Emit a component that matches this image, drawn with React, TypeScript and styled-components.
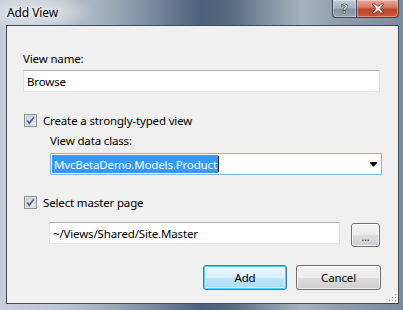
import React from "react";
import styled, { createGlobalStyle } from "styled-components";

const Global = createGlobalStyle`
  html, body { margin: 0; padding: 0; background: #fff; }
  body { font-family: "Segoe UI", "Noto Sans", sans-serif; }
`;

const Window = styled.div`
  position: relative;
  width: 403px;
  height: 310px;
  box-sizing: border-box;
  display: flex;
  flex-direction: column;
  padding: 0 4px 6px 6px;
  overflow: hidden;
  background:
    radial-gradient(ellipse 60px 18px at 35px 12px, rgba(255,255,255,0.55), rgba(255,255,255,0) 100%),
    linear-gradient(90deg, #c6cfd9 0%, #bcc6d1 15%, #9eacba 27%, #7889a0 38%, #4c6079 50%, #566a80 57%, #8595a6 67%, #a6b2bf 75%, #8e9cab 85%, #7c8c9c 100%);
`;

const TitleBar = styled.div`
  height: 25px;
  display: flex;
  align-items: flex-start;
  justify-content: space-between;
`;

const Title = styled.div`
  padding-top: 5px;
  margin-left: 1px;
  font-size: 12px;
  line-height: 15px;
  letter-spacing: -0.1px;
  color: #000;
  text-shadow: 0 0 6px rgba(255,255,255,0.9), 0 0 3px rgba(255,255,255,0.8);
`;

const Captions = styled.div`
  display: flex;
  height: 18px;
`;

const CaptionButton = styled.div<{ $kind: "help" | "close" }>`
  width: ${(p) => (p.$kind === "help" ? "25px" : "42px")};
  height: 18px;
  box-sizing: border-box;
  display: flex;
  align-items: center;
  justify-content: center;
  border: 1px solid #3d4854;
  border-top: none;
  border-left: ${(p) => (p.$kind === "close" ? "none" : "1px solid #3d4854")};
  border-radius: ${(p) => (p.$kind === "help" ? "0 0 0 4px" : "0 0 4px 0")};
  box-shadow: inset 0 0 0 1px rgba(255,255,255,0.35);
  background: ${(p) =>
    p.$kind === "help"
      ? "linear-gradient(180deg, #c2ccd6 0%, #a6b3c0 45%, #8795a5 55%, #93a1b0 100%)"
      : "linear-gradient(180deg, #e8a898 0%, #d9806c 40%, #c4432c 55%, #c9573f 100%)"};
`;

const HelpGlyph = styled.span`
  font-family: "DejaVu Sans", "Noto Sans", sans-serif;
  font-weight: bold;
  font-size: 13px;
  line-height: 13px;
  color: #fff;
  -webkit-text-stroke: 0.6px #2c3440;
  margin-top: -1px;
`;

const Client = styled.div`
  position: relative;
  flex: 1;
  display: flex;
  flex-direction: column;
  border: 1px solid #3f4d5b;
  background: #f0f0f0;
  padding: 25px 17px 0 16px;
  font-size: 11.5px;
  letter-spacing: -0.15px;
  color: #000;
`;

const Label = styled.div<{ $indent?: number; $mt?: number }>`
  height: 15px;
  line-height: 15px;
  margin-left: ${(p) => p.$indent ?? 0}px;
  margin-top: ${(p) => p.$mt ?? 0}px;
`;

const TextBox = styled.div<{ $width: number; $indent?: number; $mt?: number }>`
  width: ${(p) => p.$width}px;
  height: 22px;
  box-sizing: border-box;
  margin-left: ${(p) => p.$indent ?? 0}px;
  margin-top: ${(p) => p.$mt ?? 0}px;
  display: flex;
  align-items: center;
  padding: 0 3px;
  background: #fff;
  border: 1px solid;
  border-color: #abadb3 #dbdfe6 #e3e9ef #e2e3ea;
  white-space: nowrap;
  flex-shrink: 0;
`;

const CheckRow = styled.div<{ $mt: number }>`
  display: flex;
  align-items: center;
  gap: 6px;
  height: 15px;
  margin-left: 1px;
  margin-top: ${(p) => p.$mt}px;
  line-height: 15px;
`;

const Combo = styled.div`
  width: 332px;
  height: 22px;
  box-sizing: border-box;
  margin-left: 27px;
  margin-top: 5px;
  display: flex;
  align-items: center;
  justify-content: space-between;
  padding: 0 4px 0 1px;
  background: #fff;
  border: 1px solid #7eb4ea;
  border-radius: 1px;
`;

const SelectedWrap = styled.span`
  display: flex;
  align-items: center;
`;

const Selected = styled.span`
  display: flex;
  align-items: center;
  height: 18px;
  padding: 0 1px 0 2px;
  background: #3399ff;
  color: #fff;
  white-space: nowrap;
`;

const Caret = styled.span`
  width: 1px;
  height: 16px;
  background: #2a1a08;
`;

const MasterRow = styled.div`
  display: flex;
  align-items: flex-start;
  margin-top: 12px;
  margin-left: 26px;
`;

const Button = styled.div<{ $width: number; $height?: number; $default?: boolean }>`
  width: ${(p) => p.$width}px;
  height: ${(p) => p.$height ?? 25}px;
  box-sizing: border-box;
  display: flex;
  align-items: center;
  justify-content: center;
  border-radius: 3px;
  flex-shrink: 0;
  border: 1px solid ${(p) => (p.$default ? "#3c7fb1" : "#707070")};
  box-shadow: ${(p) =>
    p.$default
      ? "inset 0 0 0 1px #48d1fb, inset 0 0 0 2px rgba(255,255,255,0.5)"
      : "inset 0 0 0 1px rgba(255,255,255,0.7)"};
  background: ${(p) =>
    p.$default
      ? "linear-gradient(180deg, #eaf6fd 0%, #d9f0fc 50%, #bee6fd 51%, #a7d9f5 100%)"
      : "linear-gradient(180deg, #f2f2f2 0%, #ebebeb 50%, #dddddd 51%, #cfcfcf 100%)"};
`;

const BrowseButton = styled(Button)`
  margin-left: 11px;
  margin-top: 1px;
  font-size: 10px;
  letter-spacing: 0;
  color: #333;
  padding-top: 3px;
`;

const Footer = styled.div`
  display: flex;
  justify-content: flex-end;
  gap: 9px;
  margin-top: 18px;
`;

const Grip = styled.svg`
  position: absolute;
  right: 1px;
  bottom: 1px;
`;

const Checkbox = () => (
  <svg width="13" height="13" viewBox="0 0 13 13" style={{ flexShrink: 0 }}>
    <defs>
      <linearGradient id="cbg" x1="0" y1="0" x2="1" y2="1">
        <stop offset="0" stopColor="#cbd1d9" />
        <stop offset="1" stopColor="#f4f5f7" />
      </linearGradient>
    </defs>
    <rect x="0.5" y="0.5" width="12" height="12" fill="#f4f4f4" stroke="#8e8f8f" />
    <rect x="2" y="2" width="9" height="9" fill="url(#cbg)" stroke="#aeb3b9" strokeWidth="0.6" />
    <path d="M3.3 6.6 L5.3 9.3 L9.8 3.2" fill="none" stroke="#4a5f97" strokeWidth="1.7" />
  </svg>
);

export default function App() {
  return (
    <>
      <Global />
      <Window>
        <TitleBar>
          <Title>Add View</Title>
          <Captions>
            <CaptionButton $kind="help">
              <HelpGlyph>?</HelpGlyph>
            </CaptionButton>
            <CaptionButton $kind="close">
              <svg width="14" height="11" viewBox="0 0 14 11">
                <path
                  d="M1 1 H4.5 L7 3.6 L9.5 1 H13 L9 5.5 L13 10 H9.5 L7 7.4 L4.5 10 H1 L5 5.5 Z"
                  fill="#fff"
                  stroke="#5a1a10"
                  strokeWidth="0.8"
                  strokeLinejoin="round"
                />
              </svg>
            </CaptionButton>
          </Captions>
        </TitleBar>
        <Client>
          <Label>View name:</Label>
          <TextBox $width={357} $mt={4}>Browse</TextBox>
          <CheckRow $mt={21}>
            <Checkbox />
            <span>Create a strongly-typed view</span>
          </CheckRow>
          <Label $indent={27} $mt={5}>View data class:</Label>
          <Combo>
            <SelectedWrap>
              <Selected>MvcBetaDemo.Models.Product</Selected>
              <Caret />
            </SelectedWrap>
            <svg width="7" height="5" viewBox="0 0 7 5">
              <path d="M0 0 H7 V1 L4 4.5 H3 L0 1 Z" fill="#000" />
            </svg>
          </Combo>
          <CheckRow $mt={20}>
            <Checkbox />
            <span>Select master page</span>
          </CheckRow>
          <MasterRow>
            <TextBox $width={291}>~/Views/Shared/Site.Master</TextBox>
            <BrowseButton $width={29} $height={24}>...</BrowseButton>
          </MasterRow>
          <Footer>
            <Button $width={84} $default>Add</Button>
            <Button $width={85}>Cancel</Button>
          </Footer>
          <Grip width="8" height="8" viewBox="0 0 8 8">
            {[
              [6, 0],
              [6, 3],
              [3, 3],
              [6, 6],
              [3, 6],
              [0, 6],
            ].map(([x, y], i) => (
              <g key={i}>
                <rect x={x + 1} y={y + 1} width="1" height="1" fill="#fff" />
                <rect x={x} y={y} width="1" height="1" fill="#a0a0a0" />
              </g>
            ))}
          </Grip>
        </Client>
      </Window>
    </>
  );
}
